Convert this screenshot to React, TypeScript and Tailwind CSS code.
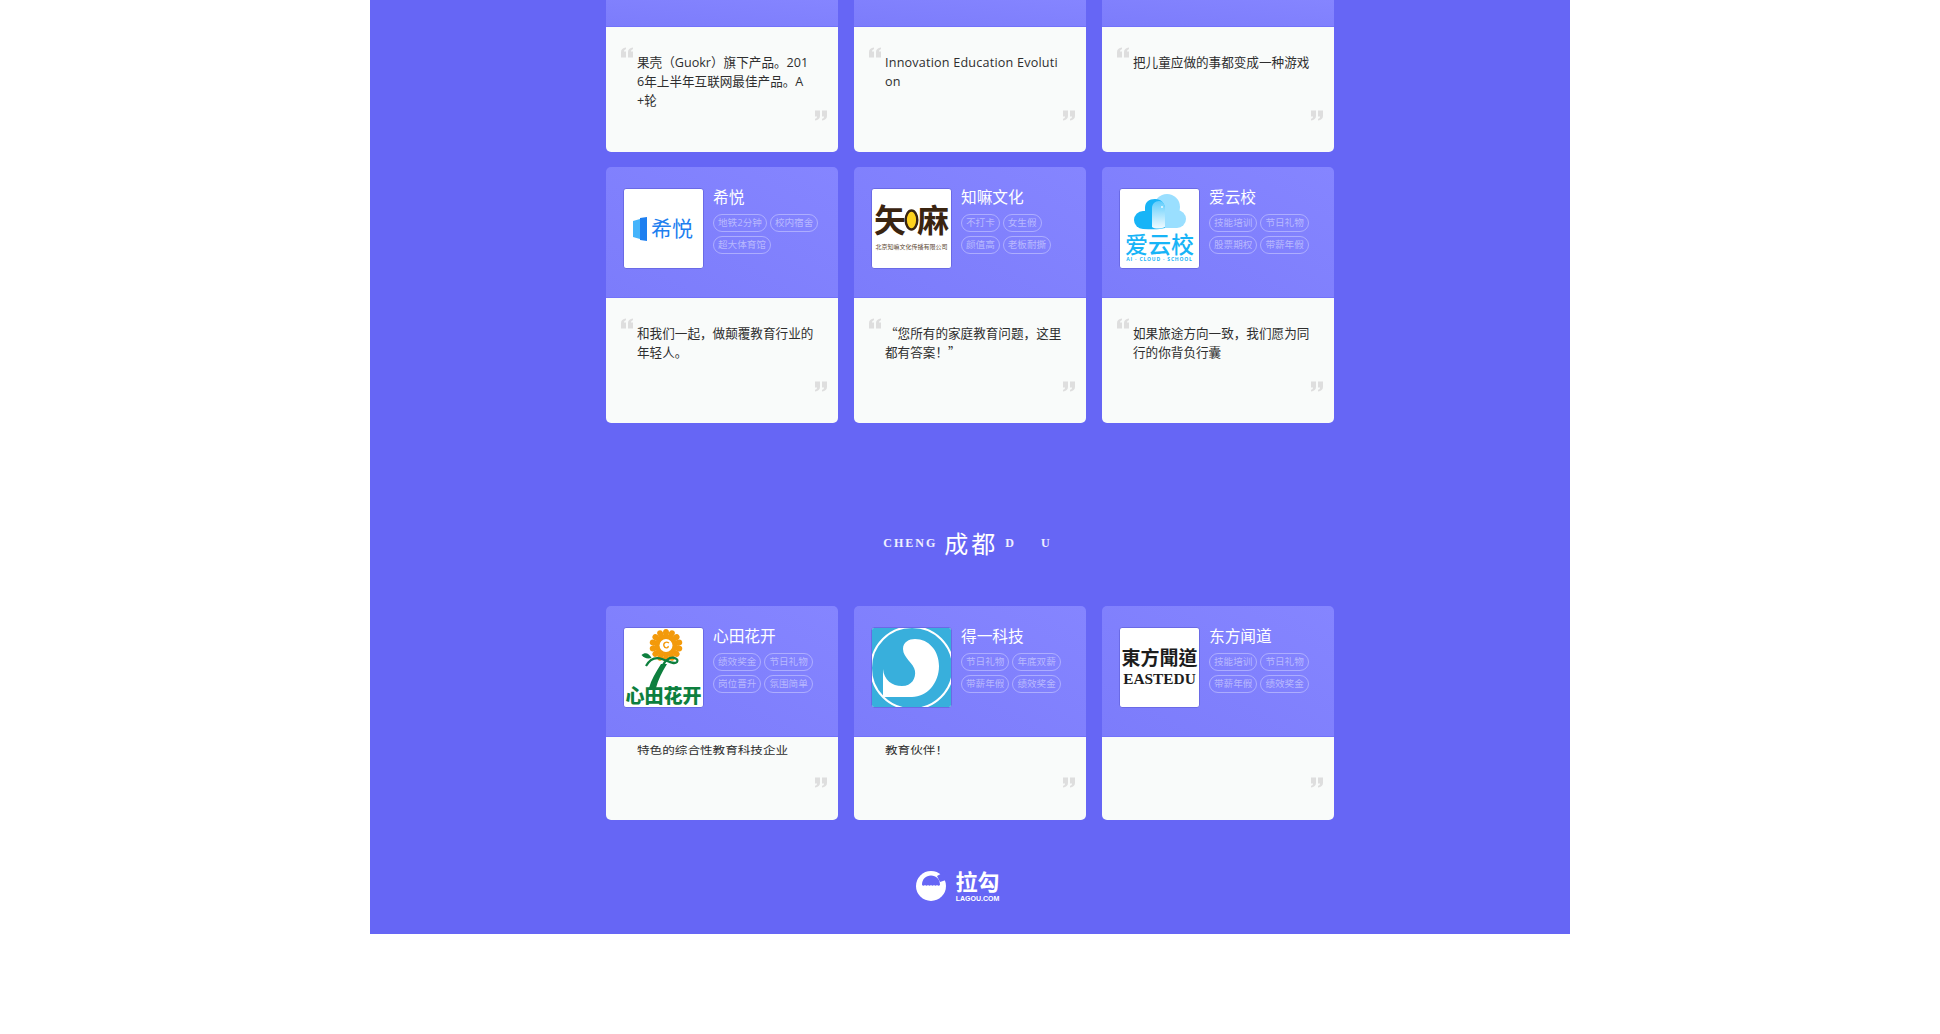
import type { ReactNode } from "react";

type Company = {
  name: string;
  logo: ReactNode;
  tags: string[];
  quote?: ReactNode;
};

function QuoteMark({ flip }: { flip?: boolean }) {
  return (
    <svg width="12" height="11" viewBox="0 0 12 11" className={flip ? "rotate-180" : ""}>
      <path
        d="M5 0.5V2.2C3.6 2.6 3 3.4 2.9 4.6H5V10.5H0V5C0 2.5 1.8 0.9 5 0.5ZM12 0.5V2.2C10.6 2.6 10 3.4 9.9 4.6H12V10.5H7V5C7 2.5 8.8 0.9 12 0.5Z"
        fill="#dedede"
      />
    </svg>
  );
}

function XiyueLogo() {
  return (
    <div className="flex h-full items-center justify-center gap-[4px] pr-[1px]">
      <svg width="14" height="24" viewBox="0 0 14 24">
        <path d="M0 4L7 2V22L0 20Z" fill="#45b4fb" />
        <path d="M7 1L14 0V24L7 23Z" fill="#1e7ff0" />
      </svg>
      <span className="text-[21px] leading-none text-[#1e7ff0]">希悦</span>
    </div>
  );
}

function ZhimaLogo() {
  return (
    <div className="flex h-full flex-col items-center pt-[11px]">
      <div className="flex h-[40px] items-center text-[#3a2410]">
        <span className="text-[32px] leading-none font-bold">矢</span>
        <svg width="15" height="26" viewBox="0 0 15 26" className="-mx-[2px]">
          <ellipse cx="7.500" cy="13" rx="5.800" ry="9.500" fill="#ffd21e" stroke="#3a2410" strokeWidth="2.400" />
        </svg>
        <span className="text-[32px] leading-none font-bold">麻</span>
      </div>
      <span className="mt-[3px] text-[6px] leading-[8px] whitespace-nowrap text-[#5a4630]">
        北京知嘛文化传播有限公司
      </span>
    </div>
  );
}

function AiyunLogo() {
  return (
    <div className="flex h-full flex-col items-center pt-[5px]">
      <svg width="52" height="36" viewBox="0 0 52 36">
        <defs>
          <linearGradient id="capsule" x1="0" y1="0" x2="0" y2="1">
            <stop offset="0" stopColor="#5fcdfc" />
            <stop offset="1" stopColor="#f2fbff" />
          </linearGradient>
        </defs>
        <circle cx="33" cy="13" r="13" fill="#9adfff" />
        <circle cx="43" cy="25" r="9" fill="#9adfff" />
        <rect x="20" y="20" width="23" height="14" fill="#9adfff" />
        <circle cx="9" cy="26" r="9" fill="#17b4f7" />
        <path d="M9 35V17H11V14C11 8 15 5 21 5C27 5 31 9 31 15V34C24 36 16 35 9 35Z" fill="#17b4f7" />
        <path d="M18 33V14C18 10 21 7 25 7C29 7 31 10 31 15V33C26 35 21 35 18 33Z" fill="url(#capsule)" />
        <circle cx="28" cy="13" r="0.900" fill="#fff" />
      </svg>
      <span className="mt-[2px] text-[23px] leading-[24px] font-medium text-[#17b4f7]">爱云校</span>
      <span className="text-[5px] leading-[7px] font-bold tracking-[0.8px] whitespace-nowrap text-[#17b4f7]">
        AI · CLOUD · SCHOOL
      </span>
    </div>
  );
}

function XintianLogo() {
  const petals = Array.from({ length: 14 }, (_, i) => (i * 360) / 14);
  return (
    <div className="flex h-full flex-col items-center">
      <svg width="54" height="60" viewBox="0 0 54 60" className="-mb-[2px] -ml-[2px]">
        {petals.map((a) => (
          <ellipse key={a} cx="30" cy="4.500" rx="3" ry="3.600" fill="#f39a0b" transform={`rotate(${a} 30 17.500)`} />
        ))}
        <circle cx="30" cy="17.500" r="11" fill="#f39a0b" />
        <circle cx="30" cy="17.500" r="6.500" fill="#fff" />
        <path d="M33 15C30 13 27 15 28 18C29 21 33 20 32 18" fill="none" stroke="#f39a0b" strokeWidth="1.400" />
        <path d="M5.500 27C9 24 13 25 15.500 30C11 31 8 30 5.500 27Z" fill="#0d7f3e" />
        <path
          d="M10 38C14 31 20 29 26 31C32 33 38 37 41 34C43 31 38 29 34 30C30 32 28 35 27 37"
          fill="none"
          stroke="#0d7f3e"
          strokeWidth="2.200"
        />
        <path d="M25 36H31C26 44 22 52 20 60H13C15 52 20 44 25 36Z" fill="#0d7f3e" />
      </svg>
      <span className="text-[19px] leading-[20px] font-black whitespace-nowrap text-[#0d7f3e]">心田花开</span>
    </div>
  );
}

function DeyiLogo() {
  return (
    <svg width="80" height="80" viewBox="0 0 80 80" className="block">
      <rect width="80" height="80" fill="#38afdc" />
      <circle cx="40" cy="40" r="41" fill="none" stroke="#fff" strokeWidth="2" />
      <path
        d="M11 41C12 52 20 58 30 58C40 58 44 50 43 43C42 35 31 30 31 21C31 14 37 11 43 11C57 11 67 23 67 38C67 55 55 69 40 69H11Z"
        fill="#fff"
      />
    </svg>
  );
}

function EasteduLogo() {
  return (
    <div className="flex h-full flex-col items-center pt-[18px] text-[#1c1c1c]">
      <span className="font-['Noto_Sans_CJK_TC',sans-serif] text-[19px] leading-[21px] font-bold whitespace-nowrap">
        東方聞道
      </span>
      <span className="mt-[4px] font-['Liberation_Serif',serif] text-[15.4px] leading-[16px] font-bold">
        EASTEDU
      </span>
    </div>
  );
}

function Card({ company, bodyClass }: { company: Company; bodyClass: string }) {
  return (
    <div className="w-[232px] overflow-hidden rounded-[5px]">
      <div className="flex h-[131px] gap-[9px] border-b border-[#7272fa] bg-linear-to-tr from-[#7c7cfb] to-[#8585ff] pt-[21px] pl-[17px]">
        <div className="h-[81px] w-[81px] shrink-0 overflow-hidden rounded-[3px] border border-[#6a6ae6] bg-white">
          {company.logo}
        </div>
        <div className="w-[116px]">
          <div className="-mt-[1px] text-[15.7px] leading-[20px] text-white">{company.name}</div>
          <div className="mt-[7px] flex flex-wrap gap-x-[3px] gap-y-[4px]">
            {company.tags.map((tag) => (
              <span
                key={tag}
                className="h-[18px] rounded-full border border-white/35 px-[4px] text-[9.6px] leading-[16px] text-white/45"
              >
                {tag}
              </span>
            ))}
          </div>
        </div>
      </div>
      <div className={`relative bg-[#f9fbfa] ${bodyClass}`}>{company.quote}</div>
    </div>
  );
}

function QuoteBody({ children }: { children: ReactNode }) {
  return (
    <>
      <div className="absolute top-[20px] left-[15px]">
        <QuoteMark />
      </div>
      <p className="box-content w-[177px] pt-[26px] pl-[31px] text-[12.6px] leading-[19px] break-all text-[#2e2e2e]">
        {children}
      </p>
      <div className="absolute right-[11px] bottom-[31px]">
        <QuoteMark flip />
      </div>
    </>
  );
}

function ClippedBody({ children }: { children?: ReactNode }) {
  return (
    <>
      <p className="box-content h-[19px] origin-left scale-y-[0.85] pt-[4px] pl-[31px] text-[12.6px] leading-[19px] text-[#2e2e2e]">
        {children}
      </p>
      <div className="absolute right-[11px] bottom-[32px]">
        <QuoteMark flip />
      </div>
    </>
  );
}

const cjk = "font-['Noto_Sans_CJK_SC',sans-serif] leading-none";

const topQuotes: { id: string; text: ReactNode }[] = [
  { id: "guokr", text: "果壳（Guokr）旗下产品。2016年上半年互联网最佳产品。A +轮" },
  { id: "innovation", text: <span className="tracking-[0.2px]">Innovation Education Evolution</span> },
  { id: "game", text: "把儿童应做的事都变成一种游戏" },
];

const row2: Company[] = [
  {
    name: "希悦",
    logo: <XiyueLogo />,
    tags: ["地铁2分钟", "校内宿舍", "超大体育馆"],
    quote: <QuoteBody>和我们一起，做颠覆教育行业的年轻人。</QuoteBody>,
  },
  {
    name: "知嘛文化",
    logo: <ZhimaLogo />,
    tags: ["不打卡", "女生假", "颜值高", "老板耐撕"],
    quote: (
      <QuoteBody>
        <span className={cjk}>“</span>您所有的家庭教育问题，这里都有答案！<span className={cjk}>”</span>
      </QuoteBody>
    ),
  },
  {
    name: "爱云校",
    logo: <AiyunLogo />,
    tags: ["技能培训", "节日礼物", "股票期权", "带薪年假"],
    quote: <QuoteBody>如果旅途方向一致，我们愿为同行的你背负行囊</QuoteBody>,
  },
];

const row3: Company[] = [
  {
    name: "心田花开",
    logo: <XintianLogo />,
    tags: ["绩效奖金", "节日礼物", "岗位晋升", "氛围简单"],
    quote: <ClippedBody>特色的综合性教育科技企业</ClippedBody>,
  },
  {
    name: "得一科技",
    logo: <DeyiLogo />,
    tags: ["节日礼物", "年底双薪", "带薪年假", "绩效奖金"],
    quote: <ClippedBody>教育伙伴！</ClippedBody>,
  },
  {
    name: "东方闻道",
    logo: <EasteduLogo />,
    tags: ["技能培训", "节日礼物", "带薪年假", "绩效奖金"],
    quote: <ClippedBody />,
  },
];

export default function App() {
  return (
    <div className="min-h-[1034px] bg-white font-['Open_Sans','Noto_Sans_CJK_SC',sans-serif]">
      <div className="mx-auto h-[934px] w-[1200px] overflow-hidden bg-[#6666f5]">
        <div className="mx-auto flex w-[728px] justify-between">
          {topQuotes.map((q) => (
            <div key={q.id} className="w-[232px] overflow-hidden rounded-b-[5px]">
              <div className="h-[27px] border-b border-[#7272fa] bg-linear-to-tr from-[#7c7cfb] to-[#8585ff]" />
              <div className="relative h-[125px] bg-[#f9fbfa]">
                <QuoteBody>{q.text}</QuoteBody>
              </div>
            </div>
          ))}
        </div>

        <div className="mx-auto mt-[15px] flex w-[728px] justify-between">
          {row2.map((c) => (
            <Card key={c.name} company={c} bodyClass="h-[125px]" />
          ))}
        </div>

        <div className="mt-[102px] flex h-[36px] items-center justify-center pr-[5px] font-['Liberation_Serif',serif] text-[12px] font-bold tracking-[2px] text-white/90">
          <span>CHENG</span>
          <span className="mx-[7px] font-['Noto_Sans_CJK_SC',sans-serif] text-[24px] leading-[36px] font-normal tracking-[3px] text-white">
            成都
          </span>
          <span>D</span>
          <span className="ml-[25px]">U</span>
        </div>

        <div className="mx-auto mt-[45px] flex w-[728px] justify-between">
          {row3.map((c) => (
            <Card key={c.name} company={c} bodyClass="h-[83px]" />
          ))}
        </div>

        <div className="mt-[50px] flex items-center justify-center gap-[9px] pr-[24px]">
          <svg width="30" height="30" viewBox="0 0 30 30">
            <circle cx="15" cy="15" r="15" fill="#fff" />
            <path
              d="M6 14C6 8 10 4.500 15 4.500C20 4.500 24 8 24 14C23 15 22 15 21 14C20 15 19 15 18 14C17 15 16 15 15 14C14 15 13 15 12 14C11 15 10 15 9 14C8 15 7 15 6 14Z"
              fill="#6666f5"
            />
            <path d="M21 5L30 0V9L24 11Z" fill="#6666f5" />
          </svg>
          <div className="flex flex-col items-center">
            <span className="text-[22px] leading-[23px] font-bold text-white">拉勾</span>
            <span className="mt-[2px] font-['Liberation_Sans',sans-serif] text-[7px] leading-[7px] font-bold text-white">
              LAGOU.COM
            </span>
          </div>
        </div>
      </div>
    </div>
  );
}
